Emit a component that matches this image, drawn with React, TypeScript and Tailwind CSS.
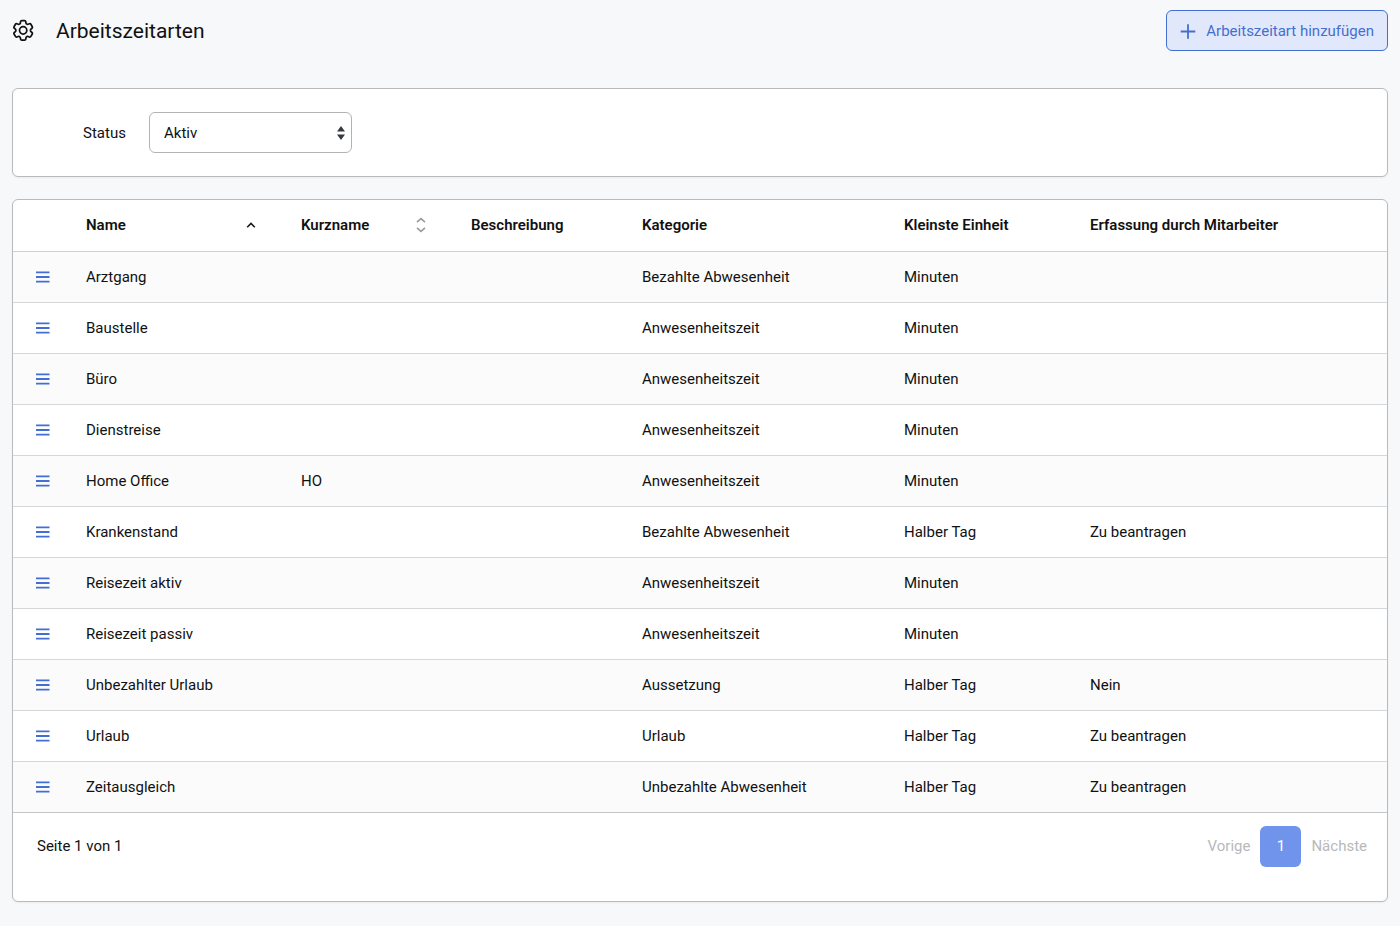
import type { ReactNode } from "react";

interface WorkTimeType {
  name: string;
  shortName?: string;
  description?: string;
  category: string;
  unit: string;
  entry?: string;
}

const TYPES: WorkTimeType[] = [
  { name: "Arztgang", category: "Bezahlte Abwesenheit", unit: "Minuten" },
  { name: "Baustelle", category: "Anwesenheitszeit", unit: "Minuten" },
  { name: "Büro", category: "Anwesenheitszeit", unit: "Minuten" },
  { name: "Dienstreise", category: "Anwesenheitszeit", unit: "Minuten" },
  { name: "Home Office", shortName: "HO", category: "Anwesenheitszeit", unit: "Minuten" },
  { name: "Krankenstand", category: "Bezahlte Abwesenheit", unit: "Halber Tag", entry: "Zu beantragen" },
  { name: "Reisezeit aktiv", category: "Anwesenheitszeit", unit: "Minuten" },
  { name: "Reisezeit passiv", category: "Anwesenheitszeit", unit: "Minuten" },
  { name: "Unbezahlter Urlaub", category: "Aussetzung", unit: "Halber Tag", entry: "Nein" },
  { name: "Urlaub", category: "Urlaub", unit: "Halber Tag", entry: "Zu beantragen" },
  { name: "Zeitausgleich", category: "Unbezahlte Abwesenheit", unit: "Halber Tag", entry: "Zu beantragen" },
];

function GearIcon() {
  return (
    <svg
      className="h-6 w-6"
      viewBox="0.8 1 24 24"
      fill="none"
      stroke="currentColor"
      strokeWidth="1.6"
      strokeLinecap="round"
      strokeLinejoin="round"
      aria-hidden="true"
    >
      <g transform="translate(-1 -.6) scale(1.08)">
        <path d="M9.594 3.94c.09-.542.56-.94 1.11-.94h2.593c.55 0 1.02.398 1.11.94l.213 1.281c.063.374.313.686.645.87.074.04.147.083.22.127.325.196.72.257 1.075.124l1.217-.456a1.125 1.125 0 0 1 1.37.49l1.296 2.247a1.125 1.125 0 0 1-.26 1.431l-1.003.827c-.293.241-.438.613-.43.992a7.723 7.723 0 0 1 0 .255c-.008.378.137.75.43.991l1.004.827c.424.35.534.955.26 1.43l-1.298 2.247a1.125 1.125 0 0 1-1.369.491l-1.217-.456c-.355-.133-.75-.072-1.076.124a6.47 6.47 0 0 1-.22.128c-.331.183-.581.495-.644.869l-.213 1.281c-.09.543-.56.94-1.11.94h-2.594c-.55 0-1.019-.398-1.11-.94l-.213-1.281c-.062-.374-.312-.686-.644-.87a6.52 6.52 0 0 1-.22-.127c-.325-.196-.72-.257-1.076-.124l-1.217.456a1.125 1.125 0 0 1-1.369-.49l-1.297-2.247a1.125 1.125 0 0 1 .26-1.431l1.004-.827c.292-.24.437-.613.43-.991a6.932 6.932 0 0 1 0-.255c.007-.38-.138-.751-.43-.992l-1.004-.827a1.125 1.125 0 0 1-.26-1.43l1.297-2.247a1.125 1.125 0 0 1 1.37-.491l1.216.456c.356.133.751.072 1.076-.124.072-.044.146-.086.22-.128.332-.183.582-.495.644-.869l.214-1.28Z" />
        <circle cx="12" cy="12" r="3.4" />
      </g>
    </svg>
  );
}

function PlusIcon() {
  return (
    <svg className="h-4 w-4" viewBox="0 0 16 16" stroke="currentColor" strokeWidth="1.8" aria-hidden="true">
      <path d="M8 1.2v14.6M.7 8.5h14.6" />
    </svg>
  );
}

function SortIcon({ sorted }: { sorted?: boolean }) {
  return (
    <svg
      className={sorted ? "h-4 w-4 text-[#16181d]" : "h-4 w-4 text-[#9b9b9b]"}
      viewBox="0 0 16 16"
      fill="none"
      stroke="currentColor"
      strokeWidth="1.6"
      aria-hidden="true"
    >
      {sorted ? <path d="M4.2 10.2 8 6.4l3.8 3.8" /> : <path d="M4 5.2 8 1.6l4 3.6M4 10.8l4 3.6 4-3.6" />}
    </svg>
  );
}

function HeaderCell({ children }: { children?: ReactNode }) {
  return <th className="h-[51px] px-3 text-left font-semibold">{children}</th>;
}

export default function App() {
  return (
    <div className="min-h-screen bg-[#f6f8fa] px-3 pt-2.5 pb-6 font-[Roboto,sans-serif] text-[15px] leading-5 text-[#111111]">
      <header className="flex items-center justify-between">
        <div className="flex items-center gap-5">
          <GearIcon />
          <h1 className="text-[21px] leading-7">Arbeitszeitarten</h1>
        </div>
        <button
          type="button"
          className="flex h-[41px] items-center gap-2.5 rounded-md border border-[#426fd1] bg-[#e2e8fb] px-[13px] text-[#426fd1]"
        >
          <PlusIcon />
          Arbeitszeitart hinzufügen
        </button>
      </header>

      <section className="mt-[37px] flex items-center rounded-md border border-[#b9babd] bg-white py-[23px] pl-[70px] shadow-xs">
        <label htmlFor="status" className="w-[66px]">
          Status
        </label>
        <div className="relative">
          <select
            id="status"
            defaultValue="aktiv"
            className="block h-[41px] w-[203px] appearance-none rounded-md border border-[#b2b3b6] bg-white px-3.5"
          >
            <option value="aktiv">Aktiv</option>
            <option value="inaktiv">Inaktiv</option>
          </select>
          <svg
            className="pointer-events-none absolute top-3.5 right-1.5 h-3.5 w-2.5 fill-[#343a40]"
            viewBox="0 0 10 14"
            aria-hidden="true"
          >
            <path d="M5 0 9 5.6H1zM5 14 1 8.4h8z" />
          </svg>
        </div>
      </section>

      <section className="mt-[22px] rounded-md border border-[#b9babd] bg-white shadow-xs">
        <table className="w-full table-fixed">
          <colgroup>
            <col className="w-[61px]" />
            <col className="w-[215px]" />
            <col className="w-[170px]" />
            <col className="w-[171px]" />
            <col className="w-[262px]" />
            <col className="w-[186px]" />
            <col />
          </colgroup>
          <thead>
            <tr className="border-b border-[#cfd0d2]">
              <HeaderCell />
              <HeaderCell>
                <button type="button" className="flex w-full items-center justify-between pr-[18px]">
                  Name
                  <SortIcon sorted />
                </button>
              </HeaderCell>
              <HeaderCell>
                <button type="button" className="flex w-full items-center justify-between pr-[18px]">
                  Kurzname
                  <SortIcon />
                </button>
              </HeaderCell>
              <HeaderCell>Beschreibung</HeaderCell>
              <HeaderCell>Kategorie</HeaderCell>
              <HeaderCell>Kleinste Einheit</HeaderCell>
              <HeaderCell>Erfassung durch Mitarbeiter</HeaderCell>
            </tr>
          </thead>
          <tbody>
            {TYPES.map((type) => (
              <tr key={type.name} className="border-b border-[#d6d7d9] odd:bg-[#fbfbfb] last:border-[#c4c5c8]">
                <td className="h-[51px] pl-[22px]">
                  <button type="button" aria-label={`Menü ${type.name}`} className="block text-[#426fd1]">
                    <svg className="h-4 w-4" viewBox="0 0 16 16" stroke="currentColor" strokeWidth="1.8" aria-hidden="true">
                      <path d="M1 3.3h13.5M1 8h13.5M1 12.7h13.5" />
                    </svg>
                  </button>
                </td>
                <td className="px-3">{type.name}</td>
                <td className="px-3">{type.shortName}</td>
                <td className="px-3">{type.description}</td>
                <td className="px-3">{type.category}</td>
                <td className="px-3">{type.unit}</td>
                <td className="px-3">{type.entry}</td>
              </tr>
            ))}
          </tbody>
        </table>

        <footer className="flex items-center justify-between px-5 pt-[13px] pb-[34px]">
          <span className="pl-1">Seite 1 von 1</span>
          <nav className="flex items-center gap-2.5 text-[#b8b9bb]">
            <button type="button" disabled>
              Vorige
            </button>
            <button type="button" className="h-[41px] w-[41px] rounded-md bg-[#7094eb] text-white">
              1
            </button>
            <button type="button" disabled>
              Nächste
            </button>
          </nav>
        </footer>
      </section>
    </div>
  );
}
